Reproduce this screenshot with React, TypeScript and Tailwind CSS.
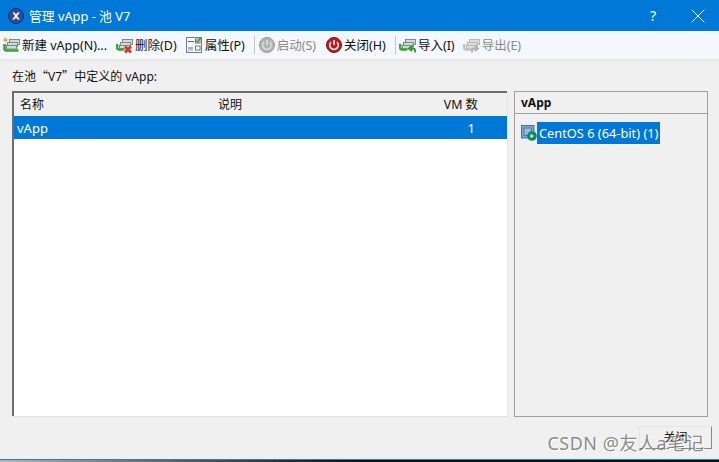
import { X } from 'lucide-react'

const FONT = "font-['Noto_Sans','Noto_Sans_CJK_SC',sans-serif]"

// ─── Toolbar icons ────────────────────────────────────────────────────────────

function ServerStack({ gray }: { gray?: boolean }) {
  const a = gray ? '#b8b8b8' : '#7f8c8e'
  const b = gray ? '#dcdcdc' : '#cfdadb'
  return (
    <>
      <rect x="6.5" y="2.5" width="10" height="5" fill={b} stroke={a} />
      <rect x="4.5" y="5.5" width="10" height="4" fill={b} stroke={a} />
      <rect x="3.5" y="8.5" width="10" height="3.5" fill={b} stroke={a} />
    </>
  )
}

function NewIcon() {
  return (
    <svg width="17" height="17" viewBox="0 0 17 17">
      <ServerStack />
      <path d="M1.5 7v4.5q0 2 2 2h12" fill="none" stroke="#3aa62c" strokeWidth="2.6" />
      <circle cx="2.5" cy="3" r="1.8" fill="#ef9a2a" />
      <path d="M2.5 .5v5M0 3h5" stroke="#e8b04a" strokeWidth="0.8" />
    </svg>
  )
}

function DeleteIcon() {
  return (
    <svg width="17" height="17" viewBox="0 0 17 17">
      <ServerStack />
      <path d="M1.2 7v3.5q0 2 2 2h5" fill="none" stroke="#3aa62c" strokeWidth="2.4" />
      <path d="M9 9.5l6 6M15 9.5l-6 6" stroke="#d8362a" strokeWidth="2.6" />
    </svg>
  )
}

function PropsIcon() {
  return (
    <svg width="17" height="17" viewBox="0 0 17 17">
      <rect x="0.5" y="0.5" width="15" height="15" fill="#f7f7f7" stroke="#7a7a7a" />
      <path d="M2 4.5h6M2 11h5" stroke="#4a6a9a" />
      <path d="M2 13h5" stroke="#9a9ac8" />
      <rect x="9.5" y="2" width="4.5" height="4" fill="#fff" stroke="#777" />
      <path d="M10 3.5l1.5 1.5 3-4" fill="none" stroke="#36a33a" strokeWidth="1.5" />
      <rect x="9.5" y="9" width="4.5" height="4" fill="#fff" stroke="#777" />
    </svg>
  )
}

function PowerIcon({ on }: { on: boolean }) {
  const fill = on ? '#c8141c' : '#b4b4b4'
  const ink = on ? '#ffffff' : '#dcdcdc'
  return (
    <svg width="16" height="16" viewBox="0 0 16 16">
      <circle cx="8" cy="8" r="7.5" fill={fill} stroke={on ? '#8f0d12' : '#999'} />
      <path d="M5 5a4.3 4.3 0 1 0 6 0" fill="none" stroke={ink} strokeWidth="1.5" />
      <path d="M8 3v5" stroke={ink} strokeWidth="1.6" />
    </svg>
  )
}

function ImportIcon() {
  return (
    <svg width="17" height="17" viewBox="0 0 17 17">
      <ServerStack />
      <path d="M1.2 7v3.5q0 2 2 2h5" fill="none" stroke="#3aa62c" strokeWidth="2.4" />
      <path d="M16 15.5v-2q0-2-2-2h-2M13 9l-3 2.5 3 2.5" fill="none" stroke="#2f9a2a" strokeWidth="1.8" />
    </svg>
  )
}

function ExportIcon() {
  return (
    <svg width="17" height="17" viewBox="0 0 17 17">
      <ServerStack gray />
      <path d="M1.2 7v3.5q0 2 2 2h5" fill="none" stroke="#c2c2c2" strokeWidth="2.4" />
      <path d="M9 15.5v-2q0-2 2-2h2M12 9l3 2.5-3 2.5" fill="none" stroke="#b0b0b0" strokeWidth="1.8" />
    </svg>
  )
}

function VmIcon() {
  return (
    <svg width="16" height="16" viewBox="0 0 16 16">
      <rect x="0.5" y="0.5" width="12.5" height="12.5" fill="#7fa6cf" stroke="#46709e" />
      <rect x="3" y="3" width="7.5" height="7.5" fill="#9bbbdb" stroke="#4f7aa8" />
      <circle cx="11" cy="11" r="4.8" fill="#0d8a66" />
      <path d="M9.5 8.8v4.4l3.6-2.2z" fill="#d6f2e2" />
    </svg>
  )
}

function LogoIcon() {
  return (
    <svg width="16" height="16" viewBox="0 0 16 16">
      <circle cx="8" cy="8" r="7.5" fill="#2c4a9e" stroke="#1c2f78" />
      <path d="M4.5 4.5h2l1.5 2 1.5-2h2.5l-3 3.5 3 3.5h-2.5l-1.5-2-1.5 2h-2.5l3-3.5z" fill="#fff" />
    </svg>
  )
}

// ─── Toolbar ──────────────────────────────────────────────────────────────────

function ToolButton({ icon, label, off }: { icon: React.ReactNode; label: string; off?: boolean }) {
  return (
    <div className={`flex items-center gap-[2px] ${off ? 'text-[#8a8a8a]' : 'text-[#111]'}`}>
      {icon}
      <span className="whitespace-nowrap text-[12.5px] pt-[1px]">{label}</span>
    </div>
  )
}

function Divider() {
  return <div className="w-px h-[18px] bg-[#c4c6c8]" />
}

export default function App() {
  return (
    <div className={`${FONT} w-[719px] h-[462px] relative overflow-hidden flex flex-col bg-[#f0f0f0] text-[12px] leading-[16px] text-[#111]`}>
      {/* Title bar */}
      <div className="h-[31px] shrink-0 bg-[#0078d7] flex items-center pl-[8px] text-white">
        <LogoIcon />
        <span className="ml-[5px] text-[12.8px]">管理 vApp - 池 V7</span>
        <span className="ml-auto mr-[30px] text-[14px]">?</span>
        <X size={24} strokeWidth={1} className="mr-[9px]" />
      </div>

      {/* Toolbar */}
      <div className="h-[30px] shrink-0 bg-[#f4f7fc] border-b-2 border-[#e8e8e8] flex items-center pl-[3px]">
        <ToolButton icon={<NewIcon />} label="新建 vApp(N)..." />
        <div className="w-[9px]" />
        <ToolButton icon={<DeleteIcon />} label="删除(D)" />
        <div className="w-[9px]" />
        <ToolButton icon={<PropsIcon />} label="属性(P)" />
        <div className="w-[9px]" />
        <Divider />
        <div className="w-[4px]" />
        <ToolButton off icon={<PowerIcon on={false} />} label="启动(S)" />
        <div className="w-[10px]" />
        <ToolButton icon={<PowerIcon on />} label="关闭(H)" />
        <div className="w-[9px]" />
        <Divider />
        <div className="w-[3px]" />
        <ToolButton icon={<ImportIcon />} label="导入(I)" />
        <div className="w-[8px]" />
        <ToolButton off icon={<ExportIcon />} label="导出(E)" />
      </div>

      {/* Body */}
      <div className="flex-1 flex flex-col min-h-0 px-[12px]">
        <div className="pt-[7px] h-[30px] shrink-0">
          在池<span className="font-['Noto_Sans_CJK_SC',sans-serif]">“</span>V7<span className="font-['Noto_Sans_CJK_SC',sans-serif]">”</span>中定义的 vApp:
        </div>

        <div className="h-[326px] shrink-0 flex gap-[7px] w-[696px]">
          {/* vApp list */}
          <div className="w-[495px] h-[325px] flex flex-col bg-white border-2 border-b-0 border-r-0 border-[#6d6d6d] shadow-[1px_1px_0_#e3e3e3]">
            <div className="h-[23px] shrink-0 bg-[#f0f0f0] flex items-center pl-[6px] pr-[29px]">
              <span className="w-[198px]">名称</span>
              <span>说明</span>
              <span className="ml-auto text-[12.4px]">VM 数</span>
            </div>
            <div className="h-[23px] shrink-0 bg-[#0078d7] text-white flex items-center pl-[3px] pr-[32px] text-[13px]">
              <span>vApp</span>
              <span className="ml-auto">1</span>
            </div>
          </div>

          {/* Detail panel */}
          <div className="w-[194px] flex flex-col border border-[#a0a0a0]">
            <div className="h-[22px] shrink-0 border-b border-[#a0a0a0] flex items-center pl-[6px] font-bold">vApp</div>
            <div className="flex items-center pl-[6px] pt-[8px]">
              <VmIcon />
              <span className="bg-[#0078d7] text-white h-[22px] flex items-center px-[2px] text-[12.8px] whitespace-nowrap">
                CentOS 6 (64-bit) (1)
              </span>
            </div>
          </div>
        </div>

        <div className="flex justify-end pt-[9px] w-[700px]">
          <div className="w-[73px] h-[23px] bg-[#f0f0f0] border border-[#e6e6e6] border-r-[#8a8a8a] border-b-[#8a8a8a] flex items-center justify-center">
            关闭
          </div>
        </div>
      </div>

      {/* Window bottom edge */}
      <div className="h-[3px] shrink-0 border-t border-[#1f7fd0] bg-gradient-to-r from-[#b5b5b5] via-[#111] to-[#111]" />

      {/* CSDN watermark */}
      <div className="absolute right-[15px] top-[432px] text-[18px] leading-[22px] tracking-[0.5px] text-[#666]/75 [text-shadow:1px_1px_0_#fff] whitespace-nowrap">
        CSDN @友人a笔记
      </div>
    </div>
  )
}
